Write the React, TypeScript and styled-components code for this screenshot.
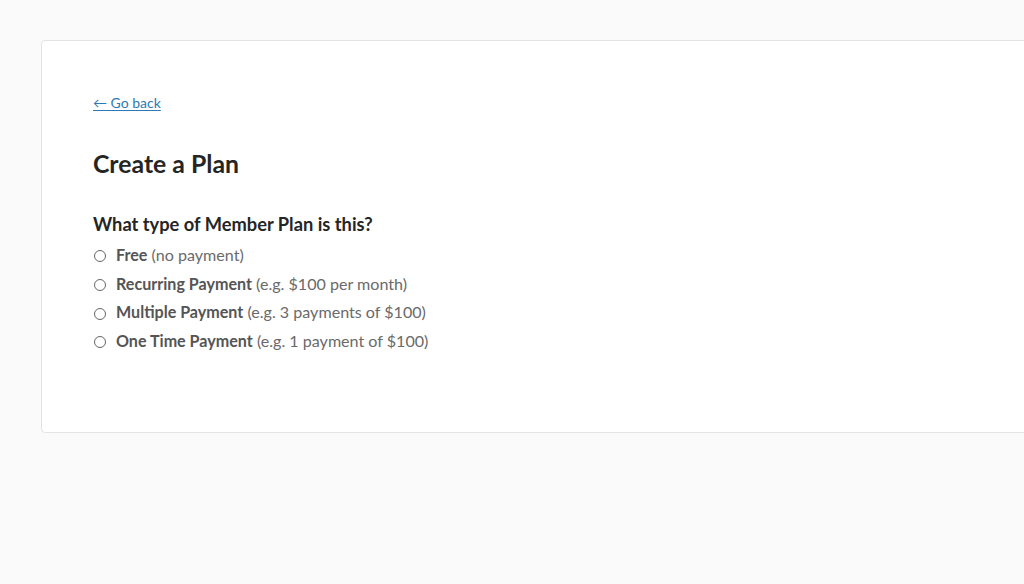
import React, { useState } from "react";
import styled, { createGlobalStyle } from "styled-components";

const GlobalStyle = createGlobalStyle`
  html, body {
    margin: 0;
    padding: 0;
    background: #fafafa;
    overflow: hidden;
  }
  body {
    font-family: Lato, "Open Sans", Arial, sans-serif;
    -webkit-font-smoothing: antialiased;
  }
`;

const Page = styled.div`
  min-height: 584px;
  padding: 40px 0 0 41px;
  box-sizing: border-box;
`;

const Card = styled.div`
  width: 1010px;
  box-sizing: border-box;
  background: #fff;
  border: 1px solid #e3e3e3;
  border-radius: 4px;
  padding: 51px 51px 76px;
`;

const BackLink = styled.a`
  display: inline-block;
  font-size: 14px;
  line-height: 20px;
  color: #2d79b5;
  text-decoration: underline;
  text-underline-offset: 2px;
  cursor: pointer;
`;

const Title = styled.h1`
  margin: 36px 0 0;
  font-size: 24.8px;
  line-height: 30px;
  font-weight: 700;
  color: #252525;
`;

const Question = styled.h2`
  margin: 33px 0 0;
  font-size: 18.3px;
  line-height: 24px;
  font-weight: 700;
  color: #252525;
`;

const Options = styled.div`
  display: flex;
  flex-direction: column;
  margin-top: 5px;
`;

const Option = styled.label`
  display: flex;
  align-items: center;
  gap: 10px;
  font-size: 16.1px;
  line-height: 28.7px;
  color: #6a6a6a;
  cursor: pointer;
`;

const Radio = styled.input.attrs({ type: "radio" })`
  appearance: none;
  margin: 2px 0 0 1px;
  width: 12px;
  height: 12px;
  border: 1px solid #666;
  border-radius: 50%;
  box-sizing: border-box;
  background: #fff;
  flex-shrink: 0;

  &:checked {
    background: radial-gradient(circle, #2d79b5 0 3px, #fff 3.5px);
    border-color: #2d79b5;
  }
`;

const Strong = styled.b`
  font-weight: 700;
  color: #555;
`;

const planTypes = [
  { key: "free", name: "Free", hint: "(no payment)" },
  { key: "recurring", name: "Recurring Payment", hint: "(e.g. $100 per month)" },
  { key: "multiple", name: "Multiple Payment", hint: "(e.g. 3 payments of $100)" },
  { key: "once", name: "One Time Payment", hint: "(e.g. 1 payment of $100)" },
];

const App = () => {
  const [type, setType] = useState("");

  return (
    <Page>
      <GlobalStyle />
      <Card>
        <BackLink>← Go back</BackLink>
        <Title>Create a Plan</Title>
        <Question>What type of Member Plan is this?</Question>
        <Options>
          {planTypes.map((p) => (
            <Option key={p.key}>
              <Radio
                name="plan-type"
                checked={type === p.key}
                onChange={() => setType(p.key)}
              />
              <span>
                <Strong>{p.name}</Strong> {p.hint}
              </span>
            </Option>
          ))}
        </Options>
      </Card>
    </Page>
  );
};

export default App;
